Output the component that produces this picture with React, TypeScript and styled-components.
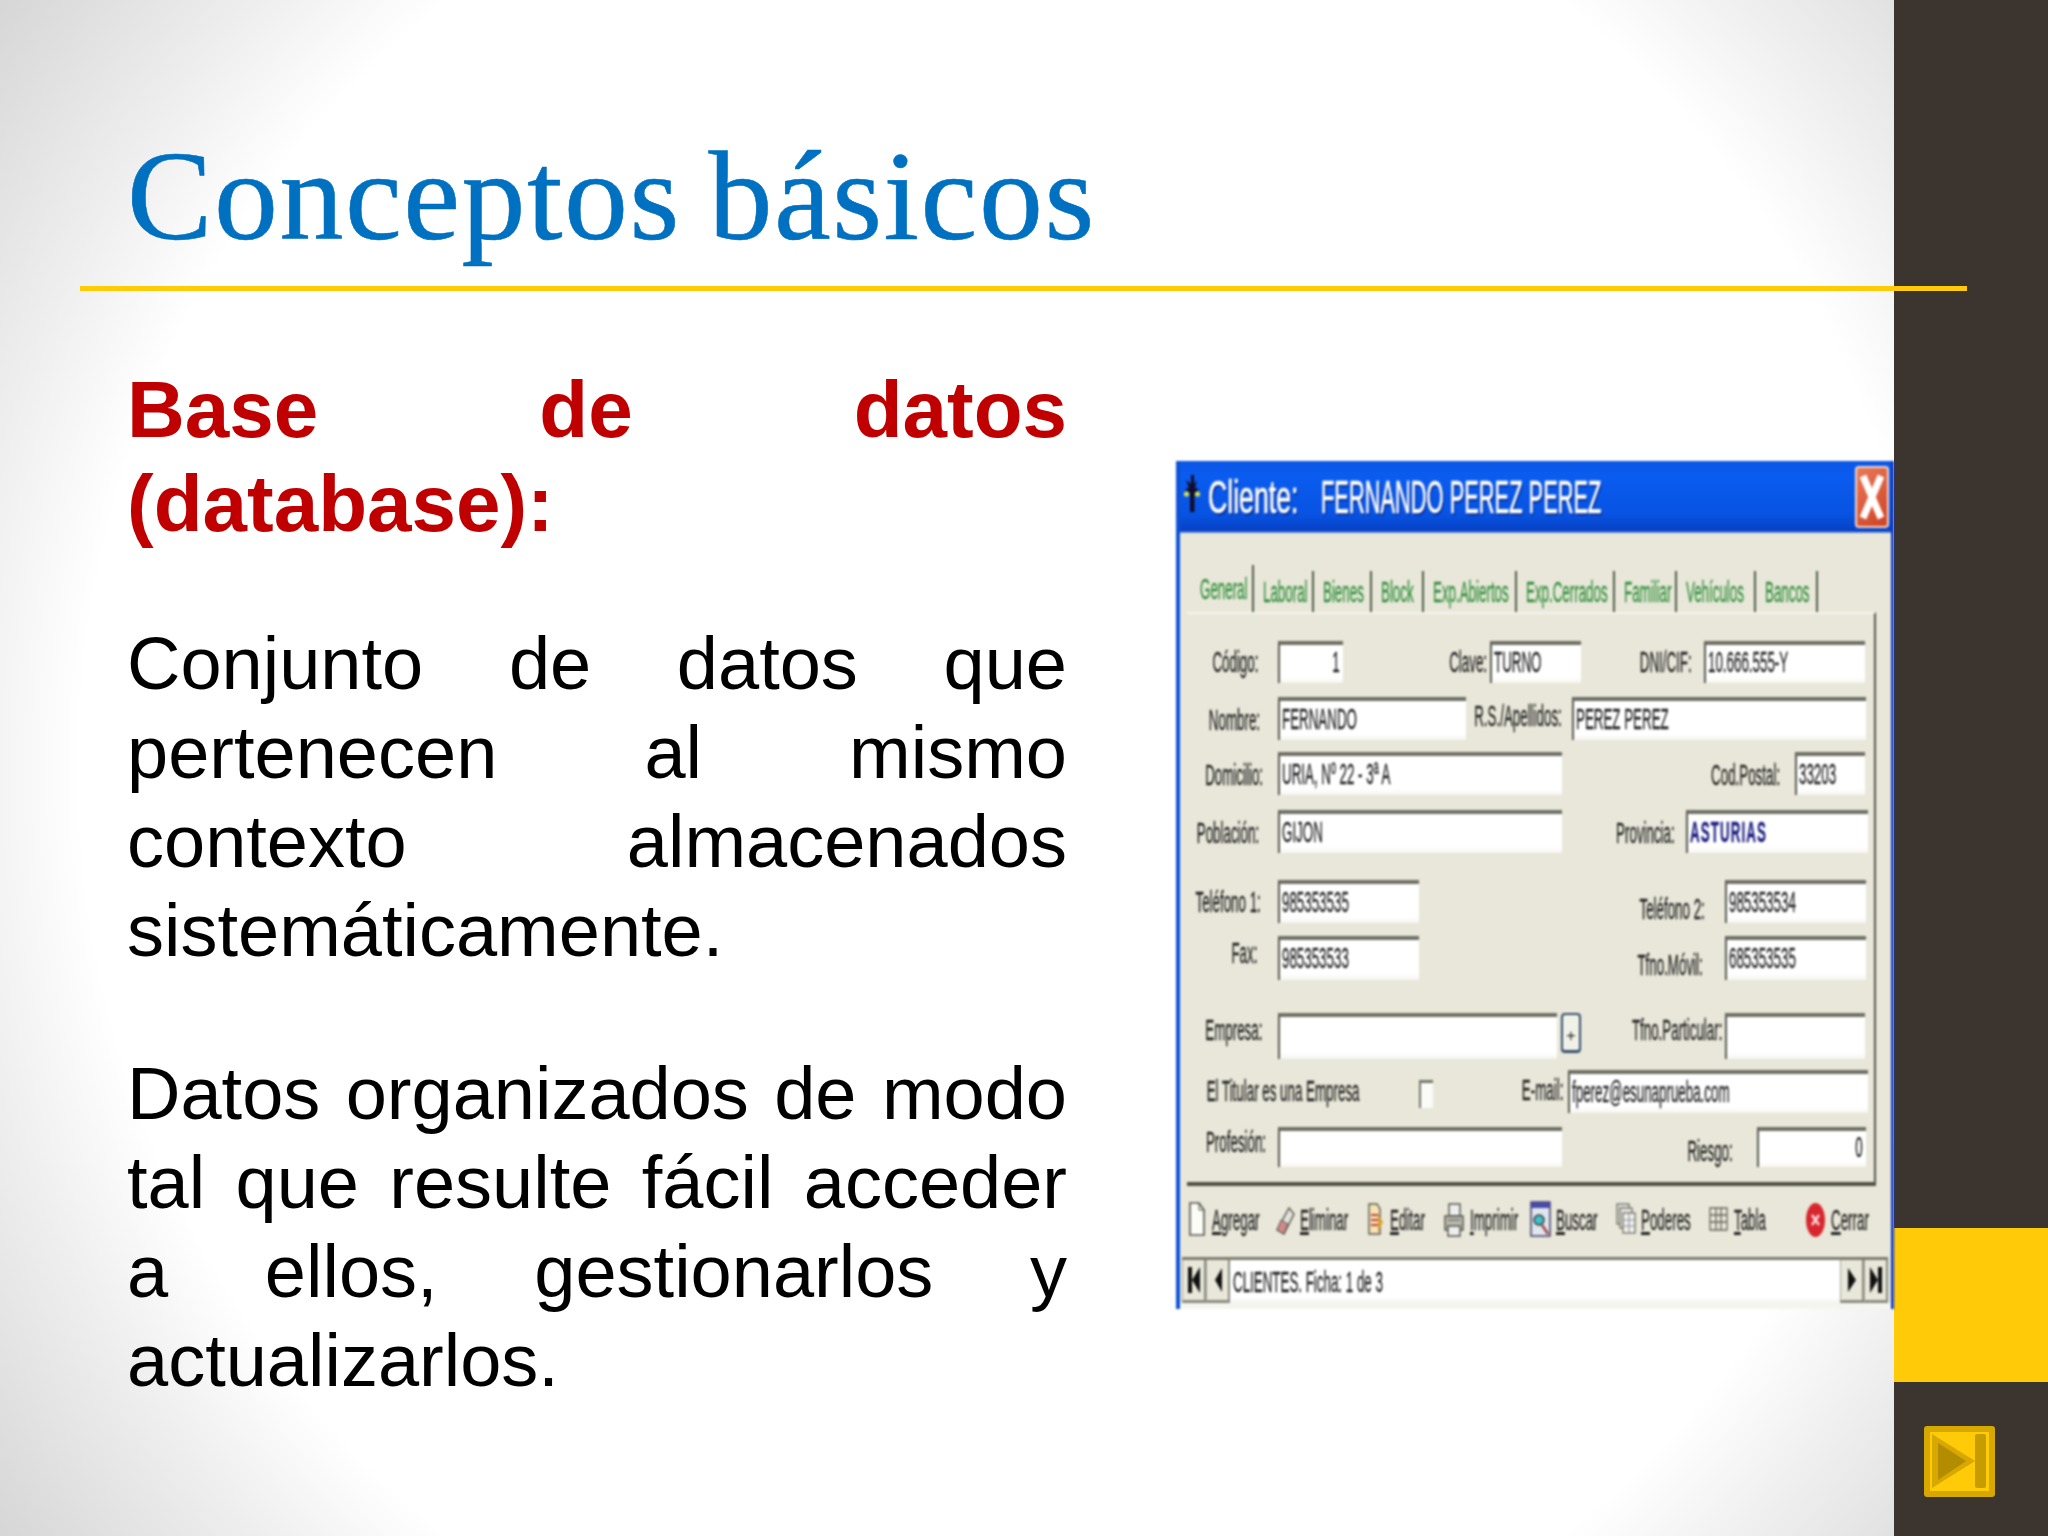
import React from "react";
import styled, { createGlobalStyle } from "styled-components";

const Global = createGlobalStyle`
  html, body { margin: 0; padding: 0; background: #fff; }
  #root { width: 2048px; height: 1536px; overflow: hidden; }
`;

const Slide = styled.div`
  position: relative;
  width: 2048px;
  height: 1536px;
  display: flex;
  overflow: hidden;
  background: radial-gradient(ellipse 1250px 1297px at 1005px 768px, #ffffff 0%, #ffffff 74%, #f0f0f0 83%, #d6d6d6 100%);
`;

const Content = styled.main`
  flex: 1;
  min-width: 0;
  display: flex;
  flex-direction: column;
`;

const Sidebar = styled.aside`
  width: 154px;
  flex-shrink: 0;
  background: #3b342f;
  display: flex;
  flex-direction: column;
  align-items: center;
  padding-top: 1228px;
  box-sizing: border-box;
`;

const YellowBand = styled.div`
  width: 100%;
  height: 154px;
  background: #ffca08;
`;

const NextButton = styled.svg`
  width: 71px;
  height: 71px;
  margin-top: 44px;
  margin-right: 23px;
`;

const Title = styled.h1`
  margin: 0;
  padding: 126px 0 0 127px;
  height: 160px;
  font: 400 128px/140px "Liberation Serif", serif;
  letter-spacing: 1.5px;
  word-spacing: -6px;
  -webkit-text-stroke: 0.6px #0070c0;
  color: #0070c0;
  white-space: nowrap;
`;

const Rule = styled.div`
  position: absolute;
  left: 80px;
  top: 286px;
  width: 1887px;
  height: 5px;
  background: #ffca08;
`;

const Columns = styled.div`
  display: flex;
  align-items: flex-start;
`;

const TextColumn = styled.section`
  width: 940px;
  margin-left: 127px;
  padding-top: 77px;
  font-family: "Liberation Sans", Arial, sans-serif;
  text-align: justify;
`;

const Heading = styled.h2`
  margin: 0 0 68px;
  font-size: 80px;
  line-height: 94px;
  font-weight: 700;
  color: #c00000;
`;

const Paragraph = styled.p`
  margin: 0 0 74px;
  font-size: 74px;
  line-height: 89px;
  color: #000;
`;

const Window = styled.div`
  flex: 1;
  margin-left: 109px;
  margin-top: 175px;
  height: 848px;
  box-sizing: border-box;
  display: flex;
  flex-direction: column;
  background: #e9e7d9;
  border-left: 4px solid #0c50d8;
  border-right: 3px solid #1038c0;
  font-family: "Liberation Sans", Arial, sans-serif;
  filter: blur(0.9px);
  overflow: hidden;
`;

const TitleBar = styled.header`
  height: 72px;
  margin: 0 -3px 0 -4px;
  flex-shrink: 0;
  display: flex;
  align-items: center;
  background: linear-gradient(180deg, #0a56e6 0%, #0a5cf0 20%, #0853e2 75%, #0640c4 97%, #8aa6e6 100%);
  color: #fff;
`;

const Logo = styled.svg`
  width: 18px;
  height: 40px;
  margin: 0 0 6px 7px;
  flex-shrink: 0;
`;

const TitleText = styled.span<{ $ml: number; $sx: number }>`
  display: inline-block;
  margin-left: ${(p) => p.$ml}px;
  font-size: 46px;
  line-height: 1;
  white-space: nowrap;
  font-weight: 400;
  width: 0;
  -webkit-text-stroke: 0.7px #fff;
  transform: scaleX(${(p) => p.$sx});
  transform-origin: left center;
  text-shadow: 2px 2px 2px rgba(0, 0, 60, 0.6);
`;

const CloseButton = styled.div`
  width: 34px;
  height: 62px;
  margin-left: auto;
  margin-right: 5px;
  border: 2px solid #f4d6c8;
  border-radius: 4px;
  box-sizing: border-box;
  background: linear-gradient(135deg, #e87a58, #cf4224);
  display: flex;
`;

const TabStrip = styled.div`
  height: 47px;
  margin-top: 32px;
  flex-shrink: 0;
  display: flex;
  align-items: stretch;
  padding-left: 20px;
`;

const Tab = styled.div<{ $w: number; $first?: boolean }>`
  width: ${(p) => p.$w}px;
  flex-shrink: 0;
  box-sizing: border-box;
  border-right: 2px solid #4d5d48;
  display: flex;
  align-items: center;
  padding-left: ${(p) => (p.$first ? 0 : 9)}px;
  margin-top: ${(p) => (p.$first ? 0 : 6)}px;
`;

const Squeeze = styled.span<{ $right?: boolean; $color?: string; $bold?: boolean; $track?: number }>`
  flex-shrink: 0;
  font-size: 30px;
  line-height: 1;
  white-space: nowrap;
  color: ${(p) => p.$color ?? "#222"};
  font-weight: ${(p) => (p.$bold ? 700 : 400)};
  letter-spacing: ${(p) => p.$track ?? 0}px;
  -webkit-text-stroke: 0.3px currentColor;
  transform: scaleX(0.445);
  transform-origin: ${(p) => (p.$right ? "right" : "left")} center;
`;

const Panel = styled.div`
  height: 574px;
  margin-left: 7px;
  margin-right: 15px;
  flex-shrink: 0;
  box-sizing: border-box;
  border-right: 2px solid #55554e;
  border-bottom: 4px solid #4f5046;
  border-top: 2px solid #f6f5ee;
  padding-top: 27px;
  display: flex;
  flex-direction: column;
`;

const Row = styled.div<{ $h: number; $mt: number }>`
  height: ${(p) => p.$h}px;
  margin-top: ${(p) => p.$mt}px;
  display: flex;
  align-items: flex-start;
  flex-shrink: 0;
`;

const Label = styled.div<{ $x: number; $w: number; $top: number }>`
  margin-left: ${(p) => p.$x}px;
  width: ${(p) => p.$w}px;
  margin-top: ${(p) => p.$top}px;
  flex-shrink: 0;
  display: flex;
  justify-content: flex-end;
`;

const Field = styled.div<{ $x: number; $w: number; $end?: boolean }>`
  margin-left: ${(p) => p.$x}px;
  width: ${(p) => p.$w}px;
  height: 100%;
  flex-shrink: 0;
  box-sizing: border-box;
  border-top: 4px solid #6f6f64;
  border-left: 2px solid #5a5a52;
  background: linear-gradient(180deg, #fff 0%, #fff 85%, #f6f5ee 100%);
  display: flex;
  align-items: center;
  justify-content: ${(p) => (p.$end ? "flex-end" : "flex-start")};
  padding: 0 3px 4px 2px;
`;

const PlusButton = styled.div`
  margin-left: 4px;
  width: 20px;
  height: 40px;
  flex-shrink: 0;
  box-sizing: border-box;
  border: 2px solid #33506e;
  border-bottom-width: 3px;
  border-radius: 4px;
  background: #f2f1e8;
  display: flex;
  align-items: center;
  justify-content: center;
  font-size: 16px;
  color: #222;
  padding-top: 6px;
`;

const CheckBox = styled.div`
  margin-left: 60px;
  margin-top: 10px;
  width: 14px;
  height: 28px;
  flex-shrink: 0;
  box-sizing: border-box;
  border-top: 3px solid #77776c;
  border-left: 2px solid #77776c;
  background: #fbfbf7;
`;

const Toolbar = styled.div`
  height: 36px;
  margin-top: 16px;
  flex-shrink: 0;
  display: flex;
  align-items: center;
`;

const Tool = styled.div<{ $x: number; $gap: number }>`
  margin-left: ${(p) => p.$x}px;
  display: flex;
  align-items: center;
  flex-shrink: 0;
  svg {
    flex-shrink: 0;
    margin-right: ${(p) => p.$gap}px;
  }
`;

const ToolLabel = styled.div<{ $w: number }>`
  width: ${(p) => p.$w}px;
  display: flex;
`;

const Accel = styled.span`
  text-decoration: underline;
`;

const NavBar = styled.div`
  height: 46px;
  margin: 19px 3px 0 2px;
  flex-shrink: 0;
  display: flex;
  border-top: 3px solid #7b7b6e;
  box-sizing: border-box;
`;

const NavButton = styled.div`
  width: 24px;
  flex-shrink: 0;
  box-sizing: border-box;
  border-right: 2px solid #8b8b82;
  border-left: 1px solid #a9a99f;
  border-bottom: 3px solid #8b8b82;
  background: #e9e7d9;
  display: flex;
  align-items: center;
  justify-content: center;
`;

const NavText = styled.div`
  flex: 1;
  background: linear-gradient(180deg, #fff 0%, #fff 88%, #f4f3ec 100%);
  display: flex;
  align-items: center;
  padding-left: 3px;
`;

const TickStrip = styled.div`
  flex: 1;
  margin: 0 -3px 0 0;
  background: #f5f5ef;
`;

const NavGlyph = ({ d }: { d: string }) => (
  <svg width="14" height="30" viewBox="0 0 14 30">
    <path d={d} fill="#111" />
  </svg>
);

const tabs: [string, number][] = [
  ["General", 54],
  ["Laboral", 60],
  ["Bienes", 58],
  ["Block", 52],
  ["Exp.Abiertos", 93],
  ["Exp.Cerrados", 98],
  ["Familiar", 62],
  ["Vehículos", 79],
  ["Bancos", 62],
];

const Lab = ({ x, w, top, t }: { x: number; w: number; top: number; t: string }) => (
  <Label $x={x} $w={w} $top={top}>
    <Squeeze $right>{t}</Squeeze>
  </Label>
);

const Val = ({ x, w, t, end, color, bold, track }: { x: number; w: number; t?: string; end?: boolean; color?: string; bold?: boolean; track?: number }) => (
  <Field $x={x} $w={w} $end={end}>
    {t && (
      <Squeeze $right={end} $color={color} $bold={bold} $track={track}>
        {t}
      </Squeeze>
    )}
  </Field>
);

const Tl = ({ x, gap, w, first, rest, children }: { x: number; gap: number; w: number; first: string; rest: string; children: React.ReactNode }) => (
  <Tool $x={x} $gap={gap}>
    {children}
    <ToolLabel $w={w}>
      <Squeeze>
        <Accel>{first}</Accel>
        {rest}
      </Squeeze>
    </ToolLabel>
  </Tool>
);

export default function App() {
  return (
    <>
      <Global />
      <Slide>
        <Content>
          <Title>Conceptos básicos</Title>
          <Columns>
            <TextColumn>
              <Heading>Base de datos (database):</Heading>
              <Paragraph>Conjunto de datos que pertenecen al mismo contexto almacenados sistemáticamente.</Paragraph>
              <Paragraph>Datos organizados de modo tal que resulte fácil acceder a ellos, gestionarlos y actualizarlos.</Paragraph>
            </TextColumn>
            <Window>
              <TitleBar>
                <Logo viewBox="0 0 18 40">
                  <path d="M8 1 L11 1 L11 10 L14 6 L12 14 L16 15 L11.5 19 L11.5 38 L7 38 L7 19 L2 15 L6 14 L3 6 L8 10 Z" fill="#120c28" />
                  <circle cx="3.5" cy="20" r="2.6" fill="#d8e040" />
                  <circle cx="14.5" cy="20" r="2.6" fill="#d8e040" />
                </Logo>
                <TitleText $ml={7} $sx={0.58}>Cliente:</TitleText>
                <TitleText $ml={113} $sx={0.475}>FERNANDO PEREZ PEREZ</TitleText>
                <CloseButton>
                  <svg viewBox="0 0 30 58" width="30" height="58">
                    <path d="M6 8 L24 50 M24 8 L6 50" stroke="#fff" strokeWidth="7" />
                  </svg>
                </CloseButton>
              </TitleBar>
              <TabStrip>
                {tabs.map(([t, w], i) => (
                  <Tab key={t} $w={w} $first={i === 0}>
                    <Squeeze $color="#2f8f3a">{t}</Squeeze>
                  </Tab>
                ))}
              </TabStrip>
              <Panel>
                <Row $h={42} $mt={0}>
                  <Lab x={26} w={45} top={6} t="Código:" />
                  <Val x={20} w={65} t="1" end />
                  <Lab x={106} w={38} top={6} t="Clave:" />
                  <Val x={3} w={91} t="TURNO" />
                  <Lab x={58} w={53} top={6} t="DNI/CIF:" />
                  <Val x={12} w={161} t="10.666.555-Y" />
                </Row>
                <Row $h={43} $mt={14}>
                  <Lab x={23} w={50} top={8} t="Nombre:" />
                  <Val x={18} w={188} t="FERNANDO" />
                  <Lab x={6} w={90} top={4} t="R.S./Apellidos:" />
                  <Val x={10} w={294} t="PEREZ PEREZ" />
                </Row>
                <Row $h={43} $mt={12}>
                  <Lab x={21} w={55} top={8} t="Domicilio:" />
                  <Val x={15} w={284} t="URIA, Nº 22 - 3ª A" />
                  <Lab x={151} w={67} top={8} t="Cod.Postal:" />
                  <Val x={15} w={70} t="33203" />
                </Row>
                <Row $h={43} $mt={15}>
                  <Lab x={10} w={62} top={8} t="Población:" />
                  <Val x={19} w={284} t="GIJON" />
                  <Lab x={55} w={58} top={8} t="Provincia:" />
                  <Val x={11} w={182} t="ASTURIAS" color="#1a1a80" bold track={2.5} />
                </Row>
                <Row $h={43} $mt={27}>
                  <Lab x={7} w={67} top={7} t="Teléfono 1:" />
                  <Val x={17} w={141} t="985353535" />
                  <Lab x={220} w={66} top={14} t="Teléfono 2:" />
                  <Val x={20} w={141} t="985353534" />
                </Row>
                <Row $h={44} $mt={13}>
                  <Lab x={46} w={24} top={2} t="Fax:" />
                  <Val x={21} w={141} t="985353533" />
                  <Lab x={218} w={66} top={14} t="Tfno.Móvil:" />
                  <Val x={22} w={141} t="685353535" />
                </Row>
                <Row $h={46} $mt={33}>
                  <Lab x={21} w={54} top={2} t="Empresa:" />
                  <Val x={16} w={279} />
                  <PlusButton>+</PlusButton>
                  <Lab x={51} w={90} top={2} t="Tfno.Particular:" />
                  <Val x={3} w={140} />
                </Row>
                <Row $h={43} $mt={11}>
                  <Lab x={20} w={152} top={6} t="El Titular es una Empresa" />
                  <CheckBox />
                  <Lab x={91} w={39} top={5} t="E-mail:" />
                  <Val x={5} w={300} t="fperez@esunaprueba.com" />
                </Row>
                <Row $h={40} $mt={14}>
                  <Lab x={21} w={58} top={0} t="Profesión:" />
                  <Val x={12} w={284} />
                  <Lab x={127} w={44} top={9} t="Riesgo:" />
                  <Val x={24} w={109} t="0" end />
                </Row>
              </Panel>
              <Toolbar>
                <Tl x={9} gap={7} w={48} first="A" rest="gregar">
                  <svg width="16" height="36" viewBox="0 0 16 36"><path d="M1 1 H10 L15 8 V33 H1 Z" fill="#fdfdf8" stroke="#55554e" strokeWidth="1.6" /><path d="M10 1 V8 H15" fill="none" stroke="#55554e" /></svg>
                </Tl>
                <Tl x={16} gap={5} w={45} first="E" rest="liminar">
                  <svg width="19" height="36" viewBox="0 0 19 36"><path d="M13 6 L18 12 L8 32 L1 28 Z" fill="#e2e2dc" stroke="#5a5a52" strokeWidth="1.4" /><path d="M1 28 L5 18 L12 22 L8 32 Z" fill="#cf8a8a" stroke="#5a5a52" strokeWidth="1" /></svg>
                </Tl>
                <Tl x={23} gap={6} w={33} first="E" rest="ditar">
                  <svg width="16" height="36" viewBox="0 0 16 36"><path d="M1 2 H9 L12 7 V32 H1 Z" fill="#f5e3b0" stroke="#5a5a52" strokeWidth="1.4" /><path d="M3 13 H10 M3 18 H10 M3 23 H10" stroke="#c04040" strokeWidth="2" /><path d="M10 12 L15 20 L10 30 Z" fill="#d8a030" /></svg>
                </Tl>
                <Tl x={21} gap={6} w={45} first="I" rest="mprimir">
                  <svg width="20" height="36" viewBox="0 0 20 36"><path d="M5 2 H16 V14 H5 Z" fill="#eee" stroke="#55554e" strokeWidth="1.4" /><path d="M1 14 H19 V28 H1 Z" fill="#b8b8ae" stroke="#55554e" strokeWidth="1.4" /><path d="M4 24 H16 V34 H4 Z" fill="#eee" stroke="#55554e" strokeWidth="1.4" /><path d="M4 18 H16" stroke="#55554e" /></svg>
                </Tl>
                <Tl x={15} gap={5} w={43} first="B" rest="uscar">
                  <svg width="21" height="38" viewBox="0 0 21 38"><rect x="1" y="1" width="19" height="34" fill="#dfe6ee" stroke="#333366" strokeWidth="1.4" /><rect x="1" y="1" width="19" height="6" fill="#4a4aa8" /><circle cx="9" cy="19" r="5" fill="#40c0c8" stroke="#333" strokeWidth="1.4" /><path d="M12 24 L18 33" stroke="#a04040" strokeWidth="2.4" /></svg>
                </Tl>
                <Tl x={17} gap={5} w={49} first="P" rest="oderes">
                  <svg width="20" height="36" viewBox="0 0 20 36"><rect x="1" y="2" width="12" height="20" fill="#ddd" stroke="#66665c" strokeWidth="1.2" /><rect x="4" y="6" width="12" height="20" fill="#e4e4dc" stroke="#66665c" strokeWidth="1.2" /><rect x="7" y="11" width="12" height="20" fill="#f2f2ea" stroke="#66665c" strokeWidth="1.2" /><path d="M7 18 H19 M7 24 H19 M13 11 V31" stroke="#8888a0" /></svg>
                </Tl>
                <Tl x={19} gap={6} w={34} first="T" rest="abla">
                  <svg width="19" height="36" viewBox="0 0 19 36"><path d="M1 6 H18 V28 H1 Z M1 13 H18 M1 20 H18 M7 6 V28 M12 6 V28" fill="none" stroke="#66665c" strokeWidth="1.3" /></svg>
                </Tl>
                <Tl x={38} gap={6} w={35} first="C" rest="errar">
                  <svg width="19" height="36" viewBox="0 0 19 36"><ellipse cx="9.5" cy="18" rx="9.5" ry="17" fill="#d8262e" /><path d="M6 13 L13 23 M13 13 L6 23" stroke="#f8dcdc" strokeWidth="2.4" /></svg>
                </Tl>
              </Toolbar>
              <NavBar>
                <NavButton><NavGlyph d="M1 2 H5 V28 H1 Z M13 2 V28 L5 15 Z" /></NavButton>
                <NavButton><NavGlyph d="M11 3 V27 L4 15 Z" /></NavButton>
                <NavText><Squeeze>CLIENTES. Ficha: 1 de 3</Squeeze></NavText>
                <NavButton><NavGlyph d="M3 3 V27 L11 15 Z" /></NavButton>
                <NavButton><NavGlyph d="M1 2 V28 L9 15 Z M9 2 H13 V28 H9 Z" /></NavButton>
              </NavBar>
              <TickStrip />
            </Window>
          </Columns>
        </Content>
        <Sidebar>
          <YellowBand />
          <NextButton viewBox="0 0 71 71">
            <rect width="71" height="71" rx="3" fill="#d6a800" />
            <rect x="6" y="6" width="59" height="59" fill="#ffca08" />
            <path d="M8 8 L51 35 L8 62 Z" fill="#d6a800" />
            <path d="M14 17 L42 35 L14 54 Z" fill="#b38c00" />
            <rect x="51" y="8" width="11" height="54" rx="2" fill="#c79c00" />
          </NextButton>
        </Sidebar>
        <Rule />
      </Slide>
    </>
  );
}
